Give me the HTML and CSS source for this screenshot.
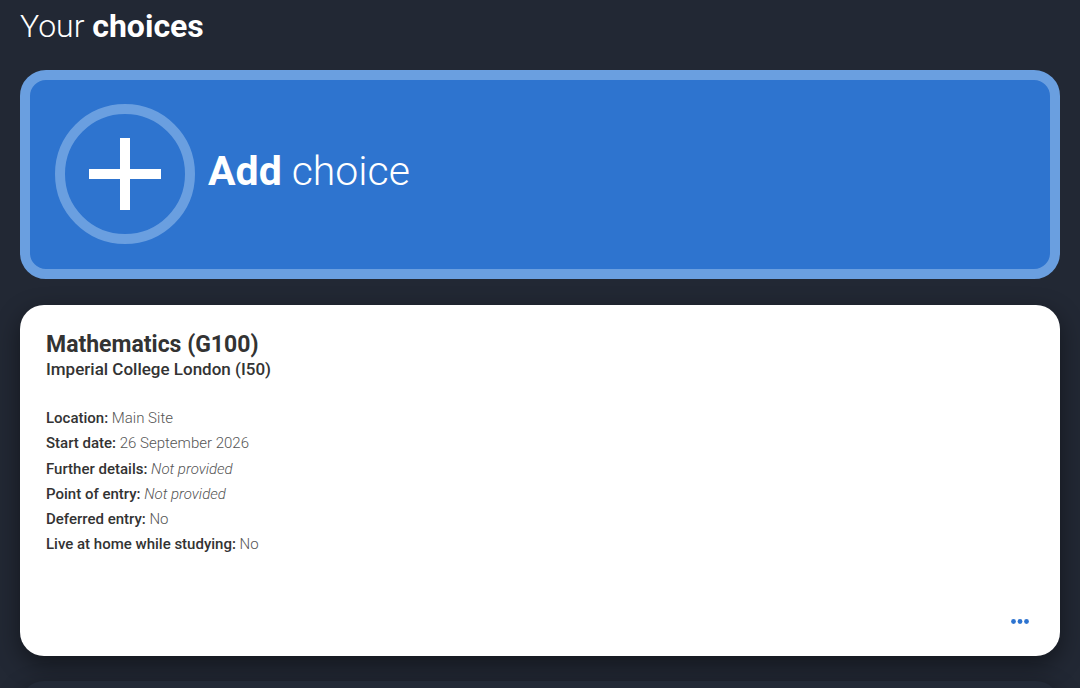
FILE: index.html
```html
<!DOCTYPE html>
<html lang="en">
<head>
    <meta charset="UTF-8">
    <meta name="viewport" content="width=device-width, initial-scale=1.0">
    <title>Your choices</title>
    <link rel="stylesheet" href="styles.css">
</head>
<body>
    <h1 class="page-title">Your <strong>choices</strong></h1>

    <div class="add-choice">
        <div class="add-icon">
            <svg width="72" height="72" viewBox="0 0 72 72">
                <path d="M36 0V72M0 36H72" stroke="#fff" stroke-width="10"/>
            </svg>
        </div>
        <div class="add-text"><strong>Add</strong> choice</div>
    </div>

    <div class="choice-card">
        <h2 class="course">Mathematics (G100)</h2>
        <p class="provider">Imperial College London (I50)</p>

        <div class="details">
            <p><span class="label">Location:</span> Main Site</p>
            <p><span class="label">Start date:</span> 26 September 2026</p>
            <p><span class="label">Further details:</span> <em>Not provided</em></p>
            <p><span class="label">Point of entry:</span> <em>Not provided</em></p>
            <p><span class="label">Deferred entry:</span> No</p>
            <p><span class="label">Live at home while studying:</span> No</p>
        </div>

        <div class="card-footer">
            <button class="more-btn" aria-label="More options">
                <svg width="18" height="5" viewBox="0 0 18 5">
                    <circle cx="2.5" cy="2.5" r="2.4" fill="#2e74d0"/>
                    <circle cx="9" cy="2.5" r="2.4" fill="#2e74d0"/>
                    <circle cx="15.5" cy="2.5" r="2.4" fill="#2e74d0"/>
                </svg>
            </button>
        </div>
    </div>

    <div class="choice-card empty"></div>
</body>
</html>
```

FILE: styles.css
```css
body {
    margin: 0;
    padding: 0 20px;
    background-color: #222834;
    font-family: Roboto, 'Liberation Sans', sans-serif;
    color: #333;
    overflow: hidden;
}

.page-title {
    margin: 0;
    padding-top: 8px;
    font-size: 32px;
    line-height: 36px;
    font-weight: 300;
    color: #fff;
}

.page-title strong {
    font-weight: 700;
}

/* Add choice button */
.add-choice {
    margin-top: 26px;
    display: flex;
    align-items: center;
    padding: 24px 25px 25px;
    border: 10px solid #6a9fe0;
    border-radius: 26px;
    background-color: #2e74cf;
    color: #fff;
}

.add-icon {
    width: 140px;
    height: 140px;
    box-sizing: border-box;
    border: 10px solid #6a9fe0;
    border-radius: 50%;
    display: flex;
    align-items: center;
    justify-content: center;
}

.add-text {
    margin-left: 13px;
    margin-bottom: 6px;
    font-size: 41px;
    font-weight: 300;
}

.add-text strong {
    font-weight: 700;
}

/* Choice cards */
.choice-card {
    margin-top: 26px;
    padding: 25px 26px 32px;
    background-color: #fff;
    border-radius: 24px;
    box-shadow: 0 8px 24px rgba(0, 0, 0, 0.45);
}

.choice-card.empty {
    margin-top: 25px;
    height: 200px;
    background-color: #232a37;
}

.course {
    margin: 0;
    font-size: 23px;
    line-height: 29px;
    font-weight: 700;
}

.provider {
    margin: 0;
    font-size: 17px;
    line-height: 21px;
    font-weight: 500;
}

.details {
    margin-top: 26px;
    font-size: 15px;
    line-height: 25.3px;
    font-weight: 300;
    color: #555;
}

.details p {
    margin: 0;
}

.details .label {
    font-weight: 500;
    color: #333;
}

.card-footer {
    display: flex;
    justify-content: flex-end;
    margin-top: 61px;
}

.more-btn {
    display: block;
    padding: 0;
    margin-right: 5px;
    border: none;
    background: none;
    line-height: 0;
    cursor: pointer;
}
```
